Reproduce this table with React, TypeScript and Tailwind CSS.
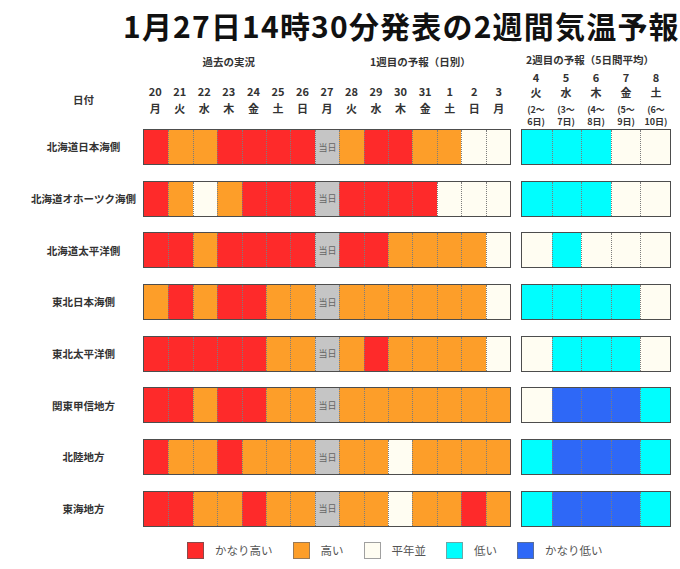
import React from 'react';

const COLOR: Record<string, string> = {
  R: 'bg-[#fe2a2a]',
  O: 'bg-[#fd9e29]',
  W: 'bg-[#fffdf2]',
  T: 'bg-[#c5c5c5]',
  Y: 'bg-[#00fefe]',
  B: 'bg-[#2e68f7]',
};

const WEEK1 = [
  ['20', '月'], ['21', '火'], ['22', '水'], ['23', '木'], ['24', '金'],
  ['25', '土'], ['26', '日'], ['27', '月'], ['28', '火'], ['29', '水'],
  ['30', '木'], ['31', '金'], ['1', '土'], ['2', '日'], ['3', '月'],
];

const WEEK2 = [
  ['4', '火', '(2～', '6日)'],
  ['5', '水', '(3～', '7日)'],
  ['6', '木', '(4～', '8日)'],
  ['7', '金', '(5～', '9日)'],
  ['8', '土', '(6～', '10日)'],
];

const ROWS = [
  { name: '北海道日本海側', d: 'ROORRRRTORROOWW', w: 'YYYWW' },
  { name: '北海道オホーツク海側', d: 'ROWORRRTRRRRWWW', w: 'YYYWW' },
  { name: '北海道太平洋側', d: 'RRORRRRTRROOOOW', w: 'WYWWW' },
  { name: '東北日本海側', d: 'ORORROOTOOOOOOW', w: 'YYYYW' },
  { name: '東北太平洋側', d: 'RRRRROOTOROOOOW', w: 'WYYYW' },
  { name: '関東甲信地方', d: 'RRORROOTOOOOOOO', w: 'WBBBY' },
  { name: '北陸地方', d: 'ROOROOOTOOWOOOO', w: 'YBBBY' },
  { name: '東海地方', d: 'RROOROOTOOWOORO', w: 'YBBBY' },
];

const LEGEND = [
  { c: 'bg-[#fe2a2a] border-[#8a4a4a]', t: 'かなり高い' },
  { c: 'bg-[#fd9e29] border-[#9a7a55]', t: '高い' },
  { c: 'bg-[#fffdf2] border-[#a0a0a0]', t: '平年並' },
  { c: 'bg-[#00fefe] border-[#6aa8a8]', t: '低い' },
  { c: 'bg-[#2e68f7] border-[#5a6f9a]', t: 'かなり低い' },
];

function Cells({ codes }: { codes: string }) {
  return (
    <>
      {codes.split('').map((k, i) => (
        <div
          key={i}
          className={`${COLOR[k]} ${i > 0 ? 'border-l border-dotted border-[#7d7d7d]' : ''} flex items-center justify-center`}
        >
          {k === 'T' && <span className="text-[9px] text-[#666] leading-none">当日</span>}
        </div>
      ))}
    </>
  );
}

export default function App() {
  return (
    <div className="w-[680px] h-[569px] bg-white text-[#333] font-['Noto_Sans_CJK_JP','Noto_Sans',sans-serif] overflow-hidden">
      <div className="h-[46px] pl-[123px] pt-[6px] text-[30px] font-bold leading-[38px] tracking-[1.2px] text-[#111]">
        1月27日14時30分発表の2週間気温予報
      </div>

      {/* header */}
      <div className="flex h-[83px]">
        <div className="w-[143px] pl-[24px] pt-[47px] text-center text-[10.5px] font-bold leading-[14px]">日付</div>
        <div className="w-[368px] pt-[9px]">
          <div className="grid grid-cols-[repeat(15,minmax(0,1fr))] h-[14px] text-[10.5px] font-bold leading-[14px]">
            <div className="col-span-7 text-center">過去の実況</div>
            <div className="col-start-8 col-span-8 pl-[15px] text-center">1週目の予報（日別）</div>
          </div>
          <div className="grid grid-cols-[repeat(15,minmax(0,1fr))] mt-[14px] text-[11px] font-bold">
            {WEEK1.map(([n, d]) => (
              <div key={n} className="flex flex-col items-center">
                <span className="h-[16px] leading-[16px]">{n}</span>
                <span className="h-[16px] leading-[16px] mt-[1px]">{d}</span>
              </div>
            ))}
          </div>
        </div>
        <div className="w-[150px] ml-[10px] pt-[7px]">
          <div className="h-[14px] pr-[12px] text-center text-[10.5px] font-bold leading-[14px] whitespace-nowrap">
            2週目の予報（5日間平均）
          </div>
          <div className="grid grid-cols-5 mt-[3px] font-bold">
            {WEEK2.map(([n, d, a, b]) => (
              <div key={n} className="flex flex-col items-center">
                <span className="h-[14px] leading-[14px] text-[11px]">{n}</span>
                <span className="h-[14px] leading-[14px] mt-[1px] text-[11px]">{d}</span>
                <span className="h-[12px] leading-[12px] mt-[5px] text-[9px] whitespace-nowrap">{a}</span>
                <span className="h-[12px] leading-[12px] text-[9px] whitespace-nowrap">{b}</span>
              </div>
            ))}
          </div>
        </div>
      </div>

      {/* rows */}
      <div className="flex flex-col gap-[15.7px]">
        {ROWS.map((r) => (
          <div key={r.name} className="flex h-[36px]">
            <div className="w-[143px] pl-[24px] flex items-center justify-center text-[10.5px] font-bold whitespace-nowrap">
              {r.name}
            </div>
            <div className="w-[368px] grid grid-cols-[repeat(15,minmax(0,1fr))] border-[1.5px] border-[#4d4d4d]">
              <Cells codes={r.d} />
            </div>
            <div className="w-[150px] ml-[10px] grid grid-cols-5 border-[1.5px] border-[#4d4d4d]">
              <Cells codes={r.w} />
            </div>
          </div>
        ))}
      </div>

      {/* legend */}
      <div className="flex items-center gap-[20px] pl-[187px] mt-[15px]">
        {LEGEND.map((l) => (
          <div key={l.t} className="flex items-center gap-[11px]">
            <div className={`w-[17px] h-[17px] border ${l.c}`} />
            <span className="text-[11.5px] text-[#555] leading-[17px]">{l.t}</span>
          </div>
        ))}
      </div>
    </div>
  );
}
